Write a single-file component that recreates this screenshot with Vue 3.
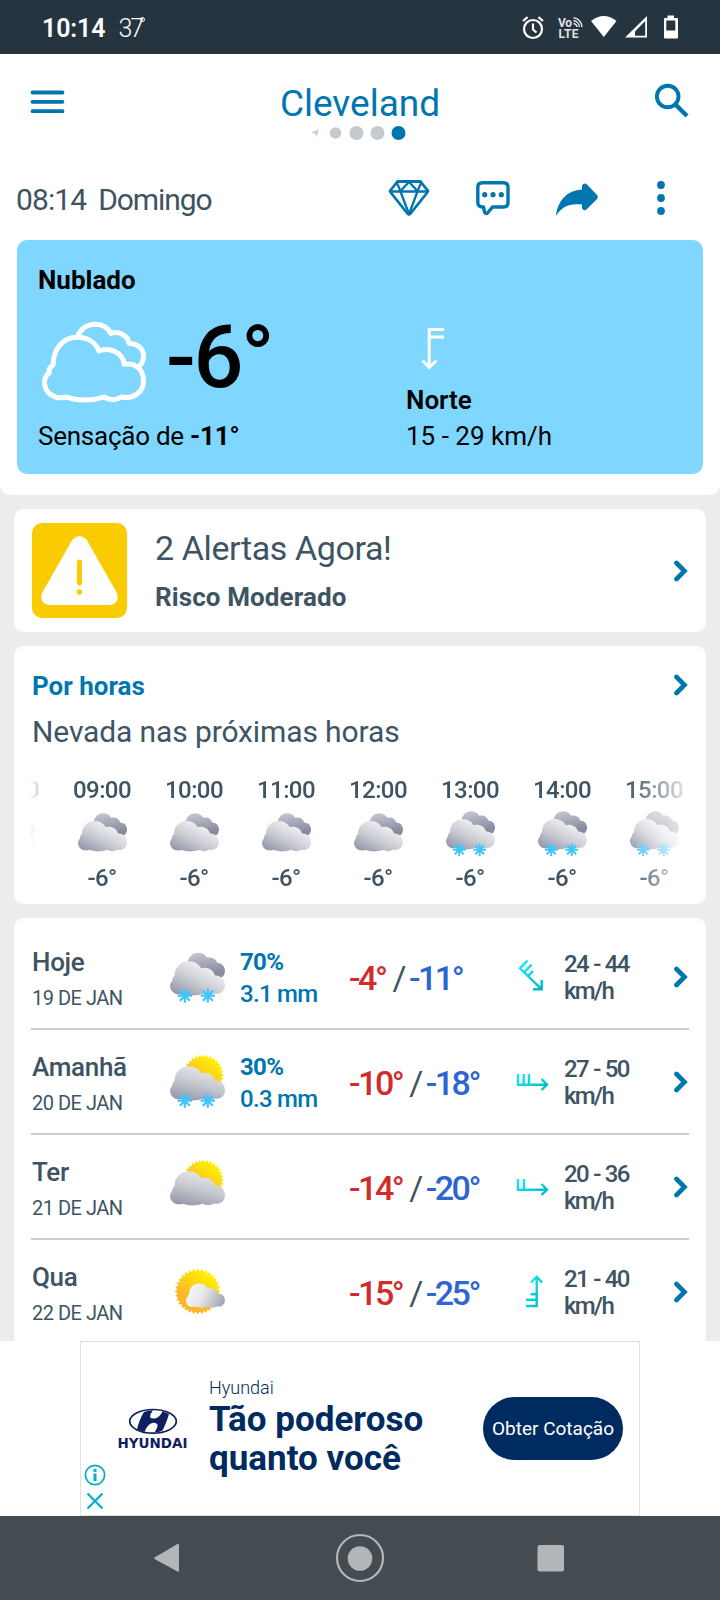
<template>
  <div class="screen">
    <svg class="sprite" width="0" height="0" aria-hidden="true">
      <defs>
        <linearGradient id="g-front" x1="0.15" y1="0.95" x2="0.75" y2="0.2">
          <stop offset="0" stop-color="#959aab" />
          <stop offset="0.5" stop-color="#cccdd4" />
          <stop offset="1" stop-color="#f1f1f3" />
        </linearGradient>
        <linearGradient id="g-day" x1="0.2" y1="1" x2="0.6" y2="0">
          <stop offset="0" stop-color="#9297a8" />
          <stop offset="0.5" stop-color="#c5c7ce" />
          <stop offset="1" stop-color="#e9e9ec" />
        </linearGradient>
        <linearGradient id="g-back" x1="0.4" y1="0" x2="0.6" y2="0.8">
          <stop offset="0" stop-color="#c3c3d0" />
          <stop offset="1" stop-color="#888c9f" />
        </linearGradient>
        <linearGradient id="g-light" x1="0" y1="0.4" x2="1" y2="0.7">
          <stop offset="0" stop-color="#f6f6f7" />
          <stop offset="0.4" stop-color="#e8e8eb" />
          <stop offset="1" stop-color="#a3a5b4" />
        </linearGradient>
        <linearGradient id="g-sun" x1="0.7" y1="0.1" x2="0.35" y2="0.65">
          <stop offset="0" stop-color="#fff200" />
          <stop offset="1" stop-color="#fab72a" />
        </linearGradient>
        <linearGradient id="g-wind" x1="0" y1="0" x2="1" y2="1">
          <stop offset="0" stop-color="#1cecf4" />
          <stop offset="1" stop-color="#00b6c6" />
        </linearGradient>
        <path id="cloud-front" :d="cloudFront" />
        <path id="cloud-back" d="M33 18C36 6 44 0 53.7 0C61 0 67 3.500 70.500 9.500C79 7.500 87.500 12 89.500 19.500C98 19.500 104 26 104 34C104 39 102 43.500 98 47L50 50Z" />
        <g id="snow" stroke="#3fc6ff" stroke-width="4.200">
          <path d="M28 65V92M14.500 78.500H41.500M18.500 69L37.500 88M37.500 69L18.500 88" />
          <path d="M71.500 65V92M58 78.500H85M62 69L81 88M81 69L62 88" />
        </g>
        <symbol id="wx-cloudy" viewBox="0 -10 104 108">
          <use href="#cloud-back" fill="url(#g-back)" y="-3" />
          <use href="#cloud-front" fill="url(#g-front)" />
        </symbol>
        <symbol id="wx-snow" viewBox="0 -10 104 108">
          <use href="#cloud-back" fill="url(#g-back)" y="-3" />
          <use href="#cloud-front" fill="url(#g-front)" />
          <use href="#snow" />
        </symbol>
        <symbol id="wx-sun-snow" viewBox="0 -10 104 108">
          <polygon :points="sunPoints(63, 30, 39)" fill="url(#g-sun)" />
          <use href="#cloud-front" fill="url(#g-day)" />
          <use href="#snow" />
        </symbol>
        <symbol id="wx-sun-cloud" viewBox="0 -10 104 108">
          <polygon :points="sunPoints(63, 30, 39)" fill="url(#g-sun)" />
          <use href="#cloud-front" fill="url(#g-day)" />
        </symbol>
        <symbol id="wx-sunny" viewBox="0 -10 104 108">
          <polygon :points="sunPoints(52.4, 42, 43.5)" fill="url(#g-sun)" />
          <use href="#cloud-front" fill="url(#g-light)" transform="translate(30 17.500) scale(0.71)" />
        </symbol>
      </defs>
    </svg>

    <div class="status-bar">
      <span class="status-time">10:14</span>
      <span class="status-temp">37<i class="status-deg"></i></span>
      <svg class="status-icons" width="160" height="26" viewBox="0 0 160 26">
        <g fill="none" stroke="#fff" stroke-width="2.200">
          <circle cx="11" cy="14" r="9" />
          <path d="M11 8.500V14.500L14.500 17.500M1 6L5.500 2.200M16.500 2.200L21 6" />
        </g>
        <g fill="#dfe3e6" class="volte">
          <text x="36" y="12" textLength="14">Vo</text>
          <text x="36.500" y="23.300" textLength="20">LTE</text>
        </g>
        <g fill="none" stroke="#dfe3e6" stroke-width="1.500">
          <path d="M51.500 8.500A4 4 0 0 1 55 12M51.500 5.500A7 7 0 0 1 57.500 12M51.500 2.800A9.500 9.500 0 0 1 60 12" />
        </g>
        <path d="M69 6Q81.800 -4 94.500 6L81.800 22Z" fill="#fff" />
        <path d="M125 1V22.500H103Z" fill="#fff" />
        <path d="M123.200 6V20.700H113V16.500Z" fill="#263440" />
        <path d="M145.500 0.500h6.500v2.500h3q1 0 1 1v18.500q0 1-1 1h-12q-1 0-1-1V4q0-1 1-1h2.500z" fill="#fff" />
        <rect x="144.300" y="5.500" width="9" height="10" fill="#263440" />
      </svg>
    </div>

    <header class="header">
      <div class="top-bar">
        <svg class="menu-icon" width="36" height="26" viewBox="0 0 36 26">
          <path d="M2.500 3.500H32.500M2.500 12.800H32.500M2.500 22.200H32.500" stroke="#0076b0" stroke-width="3.800" stroke-linecap="round" />
        </svg>
        <div class="place">
          <h1 class="place-name">Cleveland</h1>
          <svg width="100" height="16" viewBox="0 0 100 16">
            <path d="M1 7.500L9 4.500L6.500 12L5.500 8.800Z" fill="#c3cbce" />
            <circle cx="25.500" cy="8" r="5.800" fill="#c3cbce" />
            <circle cx="46.500" cy="8" r="7" fill="#c3cbce" />
            <circle cx="67.500" cy="8" r="7" fill="#c3cbce" />
            <circle cx="88.500" cy="8" r="7" fill="#0076b0" />
          </svg>
        </div>
        <svg class="search-icon" width="36" height="36" viewBox="0 0 36 36" fill="none" stroke="#0076b0">
          <circle cx="13.700" cy="13.500" r="10.800" stroke-width="3.900" />
          <path d="M21.500 21.500L33 33" stroke-width="4.400" />
        </svg>
      </div>

      <div class="sub-bar">
        <span class="local-time">08:14</span>
        <span class="weekday">Domingo</span>
        <div class="actions">
          <svg width="42" height="38" viewBox="0 0 42 38" fill="none" stroke="#0076b0" stroke-width="2.800" stroke-linejoin="round">
            <path d="M9.500 2.500H32.500L40 12L38.500 14.500L22.500 34.500Q21 36 19.500 34.500L3.500 14.500L2 12Z" />
            <path d="M3 12.500H39M8.500 3L12.500 12L21 3L29.500 12L33.500 3M12.500 12.500L21 35L29.500 12.500" stroke-width="2.300" />
          </svg>
          <svg width="36" height="36" viewBox="0 0 36 36">
            <path d="M7.500 2.800H28.500Q33 2.800 33 7.300V22.500Q33 27 28.500 27H17.500L12.500 33Q10.500 34.500 9.500 32L8.500 27H7.500Q2.800 27 2.800 22.500V7.300Q2.800 2.800 7.500 2.800Z" fill="none" stroke="#0076b0" stroke-width="3.400" stroke-linejoin="round" />
            <g fill="#0076b0">
              <circle cx="9.700" cy="14.700" r="2.600" />
              <circle cx="18" cy="14.700" r="2.600" />
              <circle cx="26.300" cy="14.700" r="2.600" />
            </g>
          </svg>
          <svg class="share-icon" width="44" height="34" viewBox="0 0 44 34">
            <path d="M0.700 33C3 17 12 7.500 27 6.500V3Q28.500 -1 32 1.500L42 12Q43.500 14 42 16L32 26Q28.500 29 27 25V21.500C15 20 7 23 0.700 33Z" fill="#0076b0" />
          </svg>
          <svg class="more-icon" width="10" height="36" viewBox="0 0 10 36" fill="#0076b0">
            <circle cx="5" cy="5" r="3.900" />
            <circle cx="5" cy="18" r="3.900" />
            <circle cx="5" cy="31" r="3.900" />
          </svg>
        </div>
      </div>

      <section class="current">
        <div class="current-main">
          <p class="condition">Nublado</p>
          <div class="current-temp">
            <svg width="104" height="82" viewBox="0 0 104.500 81" fill="none" stroke="#fff" stroke-width="5" stroke-linejoin="round">
              <path d="M35.500 15.500C38 7.500 45 2.500 53.700 2.500C60.500 2.500 66 5.500 69 11.700C77 9 86 13.500 87.500 21.800C96 21.800 102 27 102 35C102 39 100.500 42.500 97.300 45" />
              <path :d="cloudOutline" />
            </svg>
            <span>-6°</span>
          </div>
          <p class="feels">Sensação de <b>-11°</b></p>
        </div>
        <div class="current-wind">
          <svg width="24" height="44" viewBox="0 0 24 44" fill="none" stroke="#fff" stroke-width="3">
            <path d="M23 2.500H8.200V39M8.200 10H23M1.500 33.500L8.200 40.500L15.500 33.500" />
          </svg>
          <p class="wind-name">Norte</p>
          <p class="wind-speed">15 - 29 km/h</p>
        </div>
      </section>
    </header>

    <section class="card alert">
      <svg width="95" height="95" viewBox="0 0 95 95">
        <rect width="95" height="95" rx="10" fill="#facb00" />
        <path d="M40.500 16.500Q47.500 9.500 54.500 16.500L85 70Q88 80 78 82H17Q7 80 10 70Z" fill="#fff" />
        <path d="M47.500 39V60" stroke="#facb00" stroke-width="5" stroke-linecap="round" />
        <circle cx="47.500" cy="69" r="2.800" fill="#facb00" />
      </svg>
      <div class="alert-text">
        <h2 class="alert-title">2 Alertas Agora!</h2>
        <p class="alert-level">Risco Moderado</p>
      </div>
      <svg class="chevron" width="16" height="22" viewBox="0 0 16 22"><path d="M3.500 3L11.500 11L3.500 19" /></svg>
    </section>

    <section class="card hourly">
      <div class="hourly-head">
        <h2 class="hourly-title">Por horas</h2>
        <svg class="chevron" width="16" height="22" viewBox="0 0 16 22"><path d="M3.500 3L11.500 11L3.500 19" /></svg>
      </div>
      <p class="hourly-summary">Nevada nas próximas horas</p>
      <div class="hours">
        <div v-for="h in hours" :key="h.time" class="hour">
          <span class="hour-time">{{ h.time }}</span>
          <svg class="hour-icon" :class="h.icon" width="49" height="51"><use :href="`#wx-${h.icon}`" /></svg>
          <span class="hour-temp">{{ h.temp }}°</span>
        </div>
      </div>
    </section>

    <section class="card days">
      <div v-for="d in days" :key="d.date" class="day">
        <div class="day-label">
          <p class="day-name">{{ d.name }}</p>
          <p class="day-date">{{ d.date }}</p>
        </div>
        <svg class="day-icon" width="55" height="57"><use :href="`#wx-${d.icon}`" /></svg>
        <div class="precip">
          <p v-if="d.chance" class="chance">{{ d.chance }}</p>
          <p v-if="d.amount">{{ d.amount }}</p>
        </div>
        <div class="temps">
          <span class="max">{{ d.max }}°</span>
          <span class="slash">/</span>
          <span class="min">{{ d.min }}°</span>
        </div>
        <svg class="day-wind" width="34" height="34" viewBox="0 0 34 34">
          <path :d="d.wind" fill="none" stroke="url(#g-wind)" stroke-width="2.400" />
        </svg>
        <p class="day-speed"><span class="range">{{ d.speed }}</span><br />km/h</p>
        <svg class="chevron day-chevron" width="16" height="22" viewBox="0 0 16 22"><path d="M3.500 3L11.500 11L3.500 19" /></svg>
      </div>
    </section>

    <div class="ad-strip">
      <div class="ad">
        <div class="ad-marks">
          <svg width="22" height="22" viewBox="0 0 22 22" fill="none" stroke="#00aecd">
            <circle cx="11" cy="11" r="9.600" stroke-width="1.700" />
            <path d="M11 9.500V17M11 5V8" stroke-width="3" />
          </svg>
          <svg width="22" height="18" viewBox="0 0 22 18">
            <path d="M3.500 1.500L18.500 16.500M18.500 1.500L3.500 16.500" stroke="#00aecd" stroke-width="2.200" />
          </svg>
        </div>
        <svg class="ad-logo" width="72" height="42" viewBox="0 0 72 42">
          <ellipse cx="36" cy="13.300" rx="23.300" ry="11.800" fill="none" stroke="#10205e" stroke-width="1.700" />
          <path d="M27 4Q31 2.200 36 2.200Q33 6 33 9Q34 11 38 10.500Q43 9 45.500 3.200L52 6Q49 16 45.500 22.500Q42 24.300 37.500 24.500Q41 19 40.500 16.500Q39 14.300 35 15Q30 17 27.500 24L20 21.500Q22 12 27 4Z" fill="#10205e" />
          <text x="0.500" y="39.500" textLength="70" lengthAdjust="spacingAndGlyphs">HYUNDAI</text>
        </svg>
        <div class="ad-copy">
          <p class="ad-brand">Hyundai</p>
          <p class="ad-headline">Tão poderoso<br />quanto você</p>
        </div>
        <button type="button" class="ad-button">Obter Cotação</button>
      </div>
    </div>

    <nav class="nav-bar">
      <svg width="28" height="32" viewBox="0 0 28 32"><path d="M1.500 15.500L24.500 2Q26 1.500 26 3V29Q26 30.500 24.500 29.500L1.500 17Q0.700 16.300 1.500 15.500Z" fill="#b2b6b8" /></svg>
      <svg width="50" height="50" viewBox="0 0 50 50">
        <circle cx="26" cy="25" r="23" fill="none" stroke="#b2b6b8" stroke-width="2.200" />
        <circle cx="26" cy="25.500" r="12.300" fill="#b2b6b8" />
      </svg>
      <svg width="28" height="28" viewBox="0 0 28 28"><rect x="0.500" y="1" width="26.500" height="26.500" rx="2" fill="#b2b6b8" /></svg>
    </nav>
  </div>
</template>

<script setup>
const cloudOutline = 'M11.3 43.3C11 28 21 15.7 35.3 15.7C46 15.7 54 21 57.3 29.5C68 25 81 31 82.7 42.8C94 41 102 48 102 59.5C102 70 93 78 80 75.6C74 79.5 67 78.5 62 75.7C50 79.5 36 79.5 24.7 75.7C12 79 2.5 71 2.5 60.5C2.5 57 4.5 53.5 7.3 51.3C6.5 48 8.5 45 11.3 43.3Z'

const cloudFront = 'M8.5 41C8.5 25 20 13.2 35.3 13.2C46 13.2 55 18.5 59 26.5C70 23 82 29 85 40C96 39.5 104 47 104 58.5C104 69 95 77 83 74.5C77 78.5 68 78 62 75C50 79 36 79 24.7 75C10 79 0 70 0 60C0 56 1.5 53 4.5 50C3.5 47 5.5 43.5 8.5 41Z'

const hours = [
  { time: '08:00', icon: 'cloudy', temp: '-6' },
  { time: '09:00', icon: 'cloudy', temp: '-6' },
  { time: '10:00', icon: 'cloudy', temp: '-6' },
  { time: '11:00', icon: 'cloudy', temp: '-6' },
  { time: '12:00', icon: 'cloudy', temp: '-6' },
  { time: '13:00', icon: 'snow', temp: '-6' },
  { time: '14:00', icon: 'snow', temp: '-6' },
  { time: '15:00', icon: 'snow', temp: '-6' }
]

const days = [
  {
    name: 'Hoje',
    date: '19 DE JAN',
    icon: 'snow',
    chance: '70%',
    amount: '3.1 mm',
    max: '-4',
    min: '-11',
    speed: '24 - 44',
    wind: 'M12.5 1.5L5 9.3L26.5 30.2M9 13.3L16.8 5.5M13 17.2L18 12M26.7 21V30.3H18'
  },
  {
    name: 'Amanhã',
    date: '20 DE JAN',
    icon: 'sun-snow',
    chance: '30%',
    amount: '0.3 mm',
    max: '-10',
    min: '-18',
    speed: '27 - 50',
    wind: 'M3 10V20.7H32M8.7 10V20.7M14 10V20.7M26.5 15L32 20.7L26.5 26'
  },
  {
    name: 'Ter',
    date: '21 DE JAN',
    icon: 'sun-cloud',
    max: '-14',
    min: '-20',
    speed: '20 - 36',
    wind: 'M3 10V20.7H32M9 10V20.7M26.5 15L32 20.7L26.5 26'
  },
  {
    name: 'Qua',
    date: '22 DE JAN',
    icon: 'sunny',
    max: '-15',
    min: '-25',
    speed: '21 - 40',
    wind: 'M11 32H21.7V3M11 25.7H21.7M15.5 20.3H21.7M16 8.5L21.7 2.7L27 8.5'
  }
]

// Star outline with short teeth, used as the sun disc
function sunPoints(cx, cy, r) {
  const teeth = 32
  const points = []
  for (let i = 0; i < teeth * 2; i++) {
    const radius = i % 2 ? r - 5 : r
    const angle = (Math.PI * i) / teeth
    points.push(`${(cx + radius * Math.cos(angle)).toFixed(1)},${(cy + radius * Math.sin(angle)).toFixed(1)}`)
  }
  return points.join(' ')
}
</script>

<style>
body {
  background: #ecedef;
}
</style>

<style scoped>
.screen {
  width: 720px;
  height: 1600px;
  overflow: hidden;
  display: flex;
  flex-direction: column;
  background: #ecedef;
  font-family: Roboto, sans-serif;
  color: #3e5463;
}

.screen h1,
.screen h2,
.screen p {
  margin: 0;
  white-space: nowrap;
}

.screen svg {
  flex-shrink: 0;
}

.sprite {
  position: absolute;
}

/* Status bar */
.status-bar {
  height: 54px;
  flex-shrink: 0;
  display: flex;
  align-items: center;
  padding: 0 38px 0 42px;
  background: #263440;
  color: #fff;
}

.status-time {
  font-size: 25px;
  font-weight: 600;
  line-height: 30px;
  padding-top: 3px;
  letter-spacing: -0.1px;
}

.status-temp {
  display: flex;
  margin-left: 13px;
  font-size: 25px;
  font-weight: 300;
  line-height: 30px;
  padding-top: 3px;
  letter-spacing: -2px;
}

.status-deg {
  width: 3px;
  height: 3px;
  margin: 3px 0 0 -2px;
  border: 1px solid #fff;
  border-radius: 50%;
}

.status-icons {
  margin-left: auto;
  margin-top: 1px;
}

.volte {
  font-size: 12px;
  font-weight: 700;
}

/* Header */
.header {
  height: 441px;
  flex-shrink: 0;
  background: #fff;
  border-radius: 0 0 10px 10px;
}

.top-bar {
  height: 96px;
  display: grid;
  grid-template-columns: 1fr auto 1fr;
  align-items: start;
  padding: 0 30px;
}

.menu-icon {
  margin-top: 35px;
}

.search-icon {
  margin-top: 29px;
  justify-self: end;
}

.place {
  display: flex;
  flex-direction: column;
  align-items: center;
  padding-top: 28px;
}

.place-name {
  color: #0076b0;
  font-size: 37px;
  font-weight: 400;
  line-height: 44px;
}

.place svg {
  margin-top: -1px;
}

.sub-bar {
  height: 90px;
  box-sizing: border-box;
  display: flex;
  align-items: flex-start;
  padding: 30px 54px 0 16px;
  font-size: 30px;
  line-height: 40px;
}

.local-time {
  letter-spacing: -0.9px;
}

.weekday {
  margin-left: 12px;
  letter-spacing: -1.1px;
}

.actions {
  display: flex;
  align-items: center;
  gap: 44px;
  margin: -2px 0 0 auto;
}

.actions svg:first-child {
  margin-right: 1px;
}

.share-icon {
  margin-top: 5px;
}

.more-icon {
  margin-left: 13px;
}

.current {
  height: 234px;
  margin: 0 17px;
  display: flex;
  background: #7fd7ff;
  border-radius: 10px;
  color: #000;
  font-size: 26px;
  line-height: 36px;
}

.current-main {
  width: 368px;
  box-sizing: border-box;
  padding: 22px 0 0 21px;
}

.condition {
  font-weight: 700;
}

.current-temp {
  height: 120px;
  display: flex;
  align-items: center;
  padding: 7px 0 0 4px;
  box-sizing: border-box;
}

.current-temp span {
  margin: -9px 0 0 20px;
  font-size: 88px;
  font-weight: 500;
  line-height: 90px;
  letter-spacing: -2.500px;
}

.feels {
  letter-spacing: -0.25px;
}

.current-wind {
  padding-top: 87px;
}

.current-wind svg {
  display: block;
  margin-left: 36px;
}

.current-wind p {
  padding-left: 21px;
}

.current-wind .wind-name {
  margin-top: 11px;
  font-weight: 600;
}

/* Cards */
.card {
  flex-shrink: 0;
  margin: 14px 14px 0;
  background: #fff;
  border-radius: 10px;
}

.chevron {
  fill: none;
  stroke: #0076b0;
  stroke-width: 4.600;
  stroke-linecap: round;
}

.alert {
  height: 123px;
  display: flex;
  align-items: center;
  padding: 0 17px 0 18px;
}

.alert-text {
  flex: 1;
  margin-left: 28px;
}

.alert-title {
  font-size: 34px;
  font-weight: 400;
  line-height: 44px;
  letter-spacing: -0.4px;
}

.alert-text .alert-level {
  margin-top: 9px;
  font-size: 26px;
  font-weight: 700;
  line-height: 36px;
  letter-spacing: 0.1px;
}

.hourly {
  height: 258px;
  overflow: hidden;
}

.hourly-head {
  display: flex;
  justify-content: space-between;
  align-items: center;
  padding: 22px 17px 0 18px;
}

.hourly-head .chevron {
  margin-top: -2px;
}

.hourly-title {
  color: #0076b0;
  font-size: 26px;
  font-weight: 700;
  line-height: 36px;
}

.hourly .hourly-summary {
  margin-top: 8px;
  padding-left: 18px;
  font-size: 30px;
  line-height: 40px;
  letter-spacing: -0.12px;
}

.hours {
  display: flex;
  width: 658px;
  height: 130px;
  margin: 23px 0 0 15px;
  overflow: hidden;
  -webkit-mask-image: linear-gradient(to right, transparent, #000 40px, #000 596px, transparent 668px);
  mask-image: linear-gradient(to right, transparent, #000 40px, #000 596px, transparent 668px);
}

.hour {
  flex: 0 0 92px;
  display: flex;
  flex-direction: column;
  align-items: center;
  font-size: 24px;
  font-weight: 500;
  line-height: 30px;
}

.hour:first-child {
  margin-left: -65px;
}

.hour-time {
  letter-spacing: -0.6px;
}

.hour-icon {
  margin: 5px 0 1px;
}

.hour-icon.snow {
  margin: 3px 0;
}

.hour-temp {
  margin-top: 1px;
  letter-spacing: -0.6px;
}

/* Daily list */
.days {
  height: 416px;
  padding-top: 7px;
  overflow: hidden;
  border-radius: 10px 10px 0 0;
}

.day {
  height: 103px;
  margin: 0 17px;
  display: grid;
  grid-template-columns: 139px 70px 109px 166px 49px 109px 16px;
  align-items: start;
  border-bottom: 2px solid #cacccd;
}

.day-label {
  padding: 20px 0 0 1px;
}

.day-name {
  font-size: 26px;
  font-weight: 500;
  line-height: 34px;
  letter-spacing: -0.3px;
}

.day-label .day-date {
  margin-top: 4px;
  font-size: 20px;
  line-height: 30px;
  letter-spacing: -0.5px;
}

.day-icon {
  margin-top: 24px;
}

.precip {
  padding-top: 21px;
  color: #0076b0;
  font-size: 24px;
  font-weight: 500;
  line-height: 32px;
  letter-spacing: -0.7px;
}

.chance {
  font-weight: 700;
}

.temps {
  display: flex;
  padding-top: 33px;
  font-size: 34px;
  font-weight: 500;
  line-height: 40px;
  letter-spacing: -2.500px;
}

.max {
  color: #d02c2b;
}

.slash {
  margin: 0 5px 0 7px;
  font-weight: 400;
}

.min {
  color: #2d65d2;
}

.day-wind {
  margin-top: 34px;
}

.day-speed {
  padding-top: 26px;
  font-size: 24px;
  font-weight: 500;
  line-height: 27px;
  letter-spacing: -1.800px;
}

.range {
  letter-spacing: -1.700px;
  word-spacing: 1px;
}

.day-chevron {
  margin-top: 41px;
}

/* Ad */
.ad-strip {
  height: 175px;
  flex-shrink: 0;
  display: flex;
  justify-content: center;
  background: #fff;
}

.ad {
  width: 560px;
  height: 175px;
  box-sizing: border-box;
  display: flex;
  align-items: flex-start;
  border: 1px solid #dfe0e1;
}

.ad-marks {
  width: 22px;
  margin: 122px 0 0 3px;
  display: flex;
  flex-direction: column;
  gap: 6px;
}

.ad-logo {
  margin: 66px 0 0 11px;
}

.ad-logo text {
  fill: #10205e;
  font-family: 'DejaVu Sans', sans-serif;
  font-size: 13.500px;
  font-weight: 700;
}

.ad-copy {
  flex: 1;
  margin: 33px 0 0 20px;
  color: #002b60;
}

.ad-brand {
  font-size: 18px;
  font-weight: 300;
  line-height: 25px;
}

.ad-headline {
  font-size: 35px;
  font-weight: 700;
  line-height: 39px;
}

.ad-button {
  flex-shrink: 0;
  width: 140px;
  height: 63px;
  margin: 55px 16px 0 0;
  padding: 0;
  border: none;
  border-radius: 32px;
  background: #002b60;
  color: #fff;
  font-family: Roboto, sans-serif;
  font-size: 19px;
  white-space: nowrap;
}

/* System navigation */
.nav-bar {
  height: 84px;
  flex-shrink: 0;
  display: flex;
  justify-content: space-between;
  align-items: center;
  padding: 0 155px 0 153px;
  background: #444c52;
}
</style>
